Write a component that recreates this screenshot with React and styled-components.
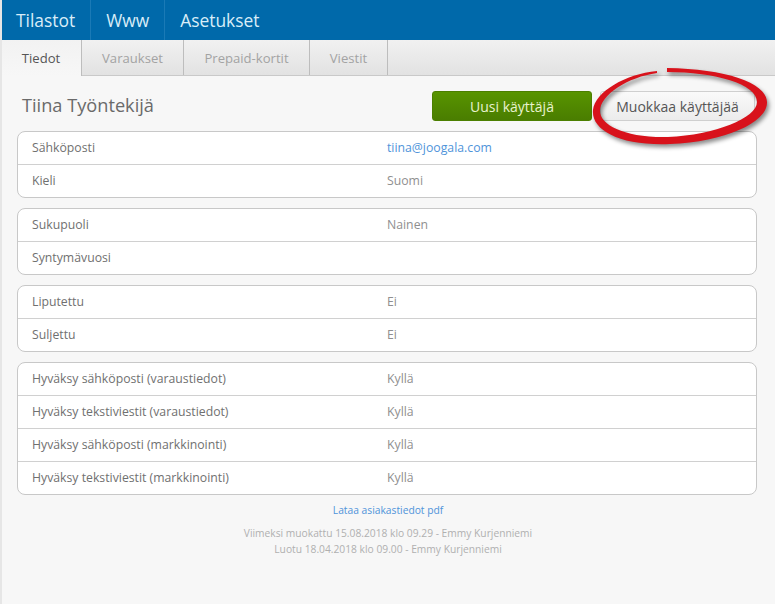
import React from "react";
import styled, { createGlobalStyle } from "styled-components";

const GlobalStyle = createGlobalStyle`
  html, body {
    margin: 0;
    padding: 0;
    background: #f7f7f7;
  }
  body {
    font-family: "Open Sans", "Liberation Sans", sans-serif;
  }
`;

const Page = styled.div`
  position: relative;
  width: 775px;
  height: 604px;
  overflow: hidden;
  background: #f7f7f7;
  box-sizing: border-box;
  border-left: 2px solid #e6e6e6;
`;

const TopBar = styled.nav`
  display: flex;
  height: 40px;
  margin-left: -2px;
  background: #0069aa;
`;

const TopItem = styled.a`
  display: flex;
  align-items: center;
  padding: 0 15px 0 ${p => (p.$first ? "16px" : "15px")};
  font-size: 17.4px;
  color: #d9edf8;
  border-right: ${p => (p.$last ? "none" : "1px solid #1a7ab6")};
`;

const Tabs = styled.div`
  display: flex;
  height: 36px;
  margin-left: -1px;
  background: linear-gradient(#f1f1f1, #e2e2e2);
  border-bottom: 1px solid #c9c9c9;
  box-sizing: border-box;
`;

const Tab = styled.a`
  display: flex;
  align-items: center;
  justify-content: center;
  box-sizing: border-box;
  width: ${p => p.$width}px;
  height: ${p => (p.$active ? "36px" : "35px")};
  font-size: 13.1px;
  color: ${p => (p.$active ? "#555" : "#a3a3a3")};
  background: ${p => (p.$active ? "linear-gradient(#f2f2f2, #f7f7f7)" : "transparent")};
  border-right: 1px solid #bdbdbd;
`;

const Content = styled.main`
  padding: 0 18px 0 15px;
`;

const Header = styled.header`
  display: flex;
  align-items: center;
  box-sizing: border-box;
  height: 55px;
  padding: 5px 2px 0 5px;
`;

const Title = styled.h1`
  flex: 1;
  margin: 0 0 2px;
  font-size: 18.2px;
  font-weight: 400;
  color: #6a6a6a;
`;

const Button = styled.button`
  box-sizing: border-box;
  height: 30px;
  width: ${p => p.$width}px;
  margin-left: ${p => p.$gap || 0}px;
  font-family: inherit;
  font-size: 14px;
  border-radius: 3px;
  padding: 0;
  color: ${p => (p.$primary ? "#e9f3cf" : "#555")};
  background: ${p => (p.$primary ? "linear-gradient(#589400, #4a7d00)" : "linear-gradient(#fafafa, #ececec)")};
  border: 1px solid ${p => (p.$primary ? "#4b7f00" : "#cfcfcf")};
`;

const Groups = styled.div`
  display: flex;
  flex-direction: column;
  gap: 10px;
`;

const Group = styled.section`
  background: #fff;
  border: 1px solid #c8c8c8;
  border-radius: 8px;
`;

const Row = styled.div`
  display: flex;
  align-items: center;
  height: 31px;
  padding: 0 0 1px 14px;
  font-size: 12.25px;
  color: #707070;
  border-top: ${p => (p.$first ? "none" : "1px solid #d0d0d0")};
`;

const Label = styled.span`
  width: 355px;
`;

const Value = styled.span`
  color: #8f8f8f;
`;

const Link = styled.a`
  color: #4f94da;
`;

const Footer = styled.footer`
  display: flex;
  flex-direction: column;
  align-items: center;
  margin-top: 7px;
  padding-left: 2px;
  font-size: 10.25px;
  line-height: 16px;
  color: #b0b0b0;
`;

const FooterLink = styled(Link)`
  margin-bottom: 7px;
`;

const Circle = styled.svg`
  position: absolute;
  top: 0;
  left: -2px;
  width: 775px;
  height: 604px;
  pointer-events: none;
  filter: drop-shadow(2px 3px 2px rgba(0, 0, 0, 0.45));
`;

const groups = [
  [
    ["Sähköposti", "tiina@joogala.com", true],
    ["Kieli", "Suomi"]
  ],
  [
    ["Sukupuoli", "Nainen"],
    ["Syntymävuosi", ""]
  ],
  [
    ["Liputettu", "Ei"],
    ["Suljettu", "Ei"]
  ],
  [
    ["Hyväksy sähköposti (varaustiedot)", "Kyllä"],
    ["Hyväksy tekstiviestit (varaustiedot)", "Kyllä"],
    ["Hyväksy sähköposti (markkinointi)", "Kyllä"],
    ["Hyväksy tekstiviestit (markkinointi)", "Kyllä"]
  ]
];

const App = () => {
  return (
    <Page>
      <GlobalStyle />
      <TopBar>
        <TopItem $first>Tilastot</TopItem>
        <TopItem>Www</TopItem>
        <TopItem $last>Asetukset</TopItem>
      </TopBar>
      <Tabs>
        <Tab $active $width={81}>Tiedot</Tab>
        <Tab $width={102}>Varaukset</Tab>
        <Tab $width={126}>Prepaid-kortit</Tab>
        <Tab $width={78}>Viestit</Tab>
      </Tabs>
      <Content>
        <Header>
          <Title>Tiina Työntekijä</Title>
          <Button $primary $width={160}>Uusi käyttäjä</Button>
          <Button $width={155} $gap={8}>Muokkaa käyttäjää</Button>
        </Header>
        <Groups>
          {groups.map((rows, i) => (
            <Group key={i}>
              {rows.map(([label, value, isLink], j) => (
                <Row key={label} $first={j === 0}>
                  <Label>{label}</Label>
                  {isLink ? <Link>{value}</Link> : <Value>{value}</Value>}
                </Row>
              ))}
            </Group>
          ))}
        </Groups>
        <Footer>
          <FooterLink>Lataa asiakastiedot pdf</FooterLink>
          <span>Viimeksi muokattu 15.08.2018 klo 09.29 - Emmy Kurjenniemi</span>
          <span>Luotu 18.04.2018 klo 09.00 - Emmy Kurjenniemi</span>
        </Footer>
      </Content>
      <Circle viewBox="0 0 775 604">
        <path
          fill="#d8121b"
          d="M657 71 C625 74 595 92 593 110 C591 130 620 146 670 144 C725 142 768 122 767 102 C766 82 725 69 667 68 L667 72 C715 72 757 84 757 102 C757 118 715 135 668 137 C625 138 600 125 600 111 C600 95 628 77 657 73 Z"
        />
      </Circle>
    </Page>
  );
};

export default App;
